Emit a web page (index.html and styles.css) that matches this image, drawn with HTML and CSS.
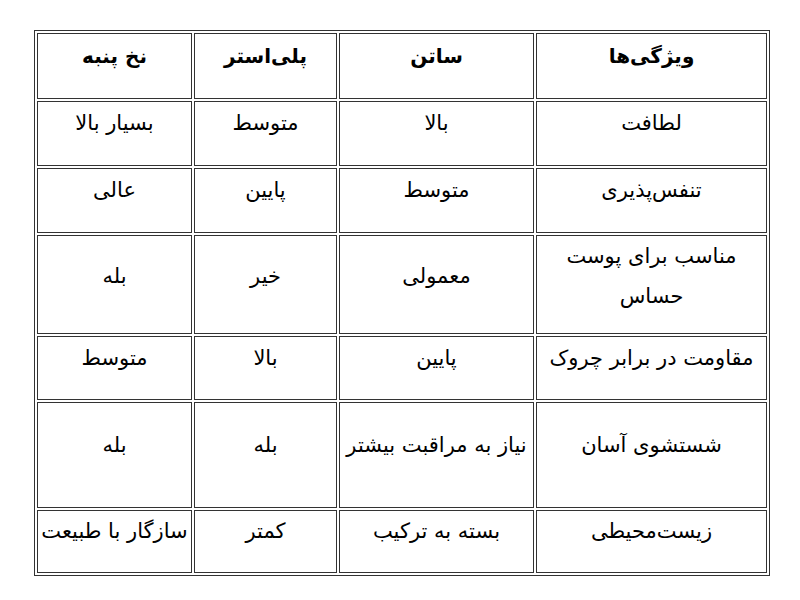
FILE: index.html
```html
<!DOCTYPE html>
<html lang="fa" dir="rtl">
<head>
<meta charset="utf-8">
<title>مقایسه پارچه‌ها</title>
<link rel="stylesheet" href="styles.css">
</head>
<body>
<table class="compare">
  <thead>
    <tr class="row-head">
      <th class="col-a">ویژگی‌ها</th>
      <th class="col-b">ساتن</th>
      <th class="col-c">پلی‌استر</th>
      <th class="col-d">نخ پنبه</th>
    </tr>
  </thead>
  <tbody>
    <tr class="row-std">
      <td>لطافت</td>
      <td>بالا</td>
      <td>متوسط</td>
      <td>بسیار بالا</td>
    </tr>
    <tr class="row-std">
      <td>تنفس‌پذیری</td>
      <td>متوسط</td>
      <td>پایین</td>
      <td>عالی</td>
    </tr>
    <tr class="row-two">
      <td>مناسب برای پوست<br>حساس</td>
      <td>معمولی</td>
      <td>خیر</td>
      <td>بله</td>
    </tr>
    <tr class="row-short">
      <td>مقاومت در برابر چروک</td>
      <td>پایین</td>
      <td>بالا</td>
      <td>متوسط</td>
    </tr>
    <tr class="row-tall">
      <td>شستشوی آسان</td>
      <td>نیاز به مراقبت بیشتر</td>
      <td>بله</td>
      <td>بله</td>
    </tr>
    <tr class="row-last">
      <td>زیست‌محیطی</td>
      <td>بسته به ترکیب</td>
      <td>کمتر</td>
      <td>سازگار با طبیعت</td>
    </tr>
  </tbody>
</table>
</body>
</html>
```
FILE: styles.css
```css
html, body {
  margin: 0;
  padding: 0;
  background: #ffffff;
}

body {
  font-family: "DejaVu Sans", "Noto Sans", sans-serif;
  color: #000000;
}

.compare {
  direction: rtl;
  margin: 30px 30px 0 0;
  width: 736px;
  table-layout: fixed;
  border: 1px solid #333333;
  border-spacing: 2px;
  border-collapse: separate;
}

.compare th,
.compare td {
  box-sizing: border-box;
  border: 1px solid #333333;
  padding: 0 2px 21px;
  text-align: center;
  vertical-align: middle;
  font-size: 21px;
  line-height: 40px;
}

.compare th {
  font-size: 20px;
  font-weight: bold;
}

.col-a { width: 231px; }
.col-b { width: 195px; }
.col-c { width: 143px; }
.col-d { width: 155px; }

.row-head { height: 66px; }
.row-std { height: 65px; }
.row-two { height: 99px; }
.row-two td { padding-bottom: 17px; }
.row-short { height: 64px; }
.row-tall { height: 106px; }
.row-last { height: 63px; }
```
